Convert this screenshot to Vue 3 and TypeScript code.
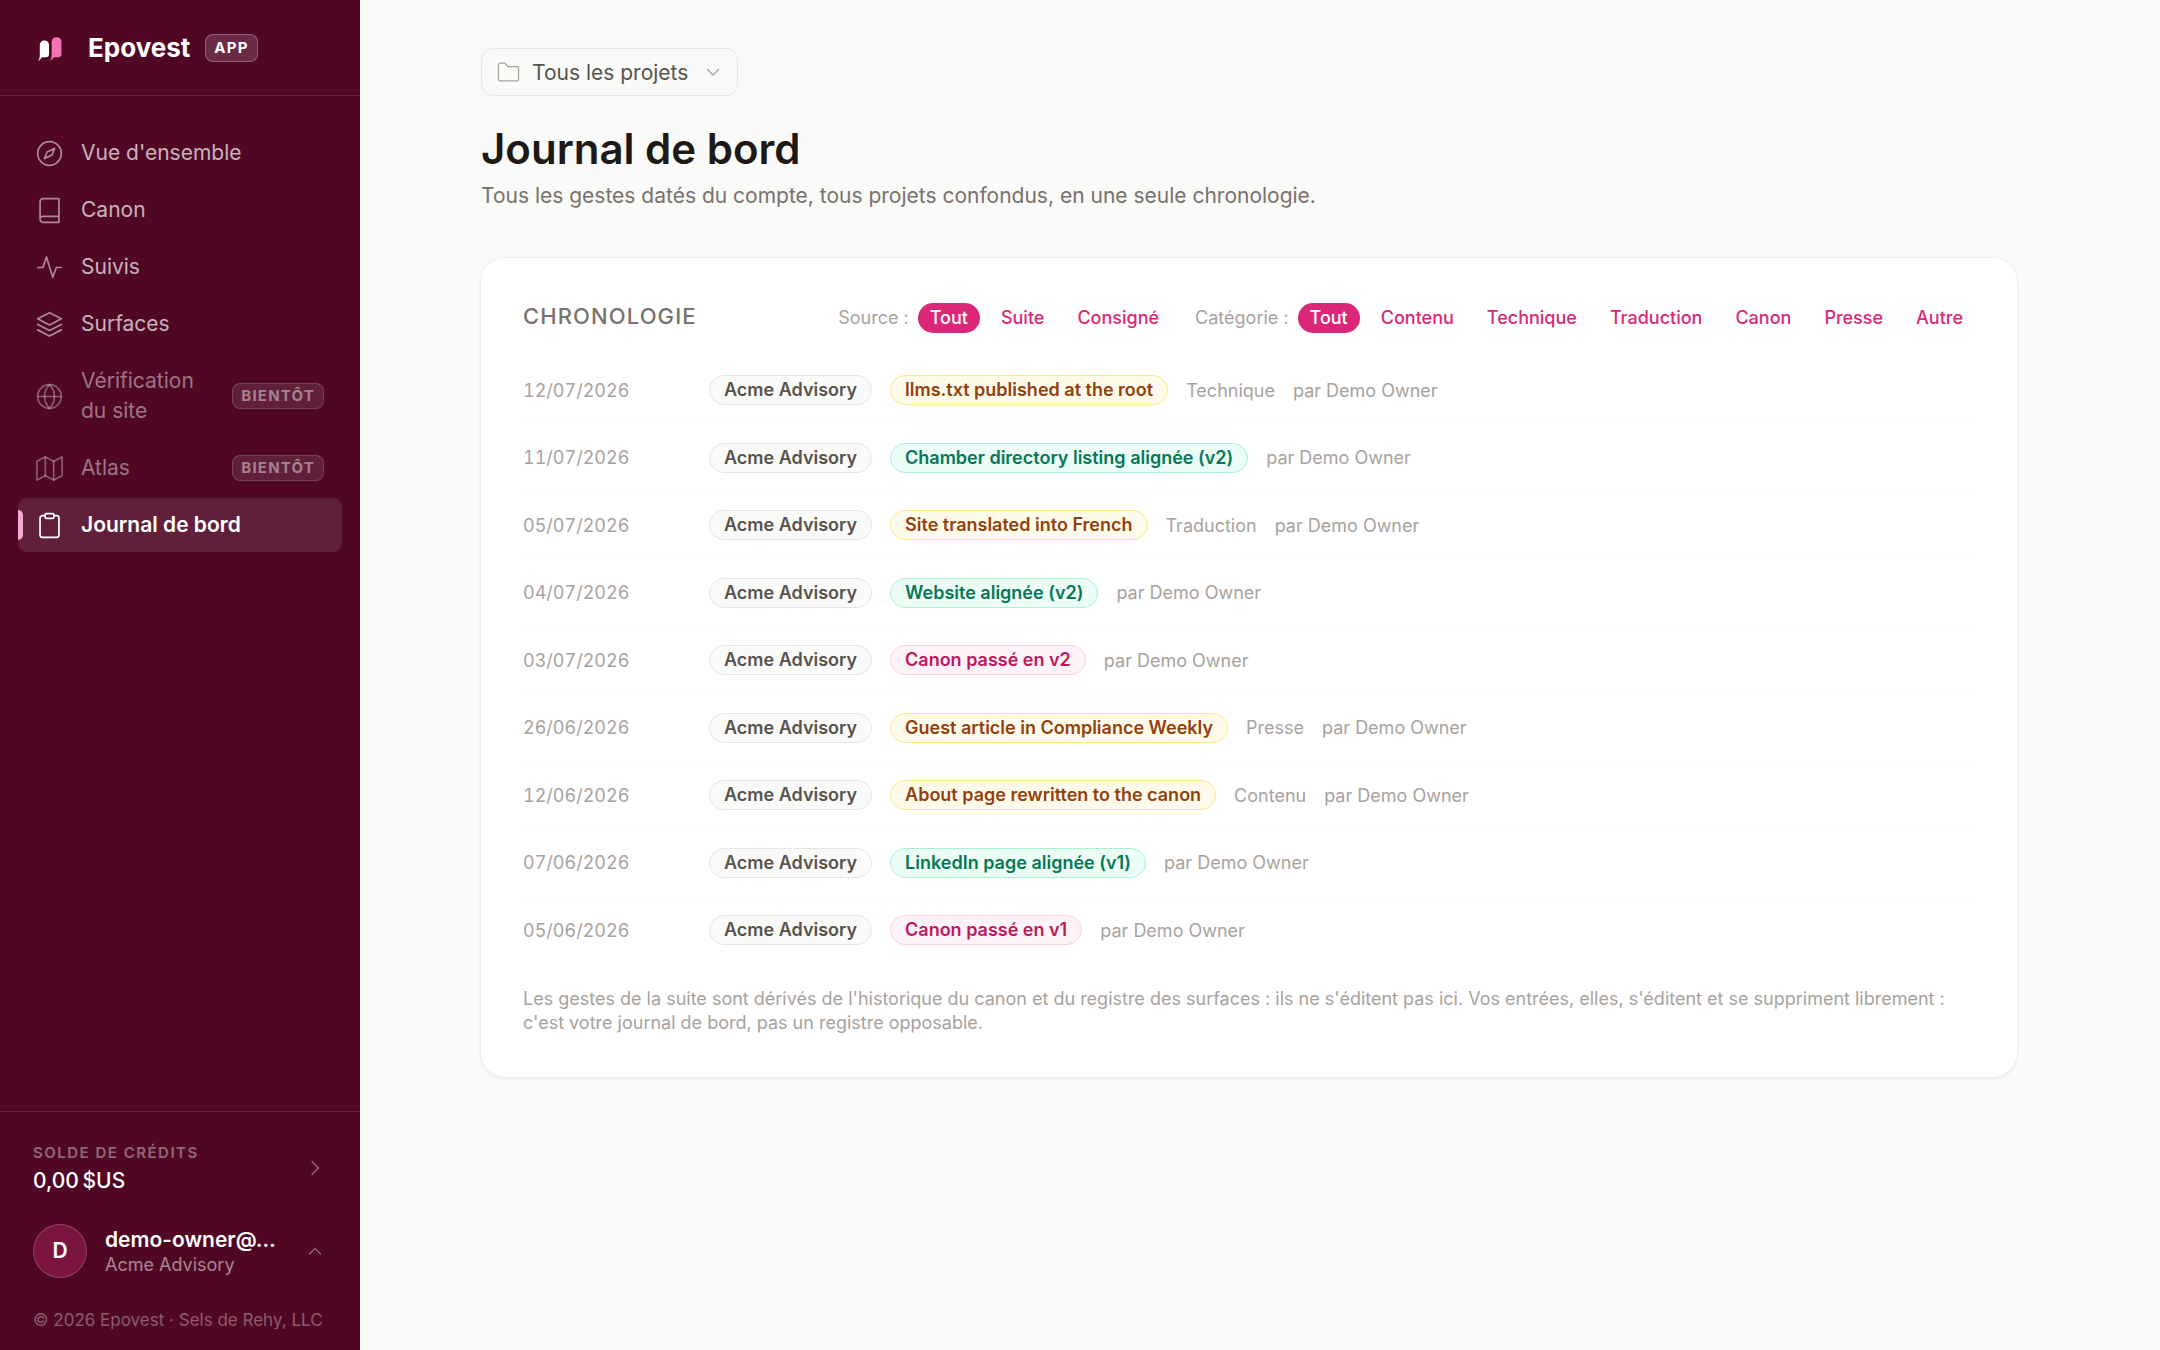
<script setup lang="ts">
import { ref } from 'vue'

type IconName = 'compass' | 'book' | 'pulse' | 'layers' | 'globe' | 'map' | 'clipboard'
type Tone = 'amber' | 'green' | 'pink'

interface NavItem {
  label: string
  icon: IconName
  soon?: boolean
  active?: boolean
}

interface Entry {
  date: string
  title: string
  tone: Tone
  category?: string
}

const icons: Record<IconName, string[]> = {
  compass: ['M12 3a9 9 0 1 0 0 18a9 9 0 1 0 0-18z', 'M15.9 8.1l-2 5-5.8 2.8 2-5z'],
  book: ['M4.8 18.6V5.2A2.2 2.2 0 0 1 7 3h12.2v18H7a2.2 2.2 0 0 1-2.2-2.3A2.2 2.2 0 0 1 7 16.5h12.2'],
  pulse: ['M3 12h4l2.7-8 4.8 15.5L17.2 12H21'],
  layers: ['M12 3l9 4.7-9 4.6-9-4.6z', 'M3 12l9 4.6 9-4.6', 'M3 16.1l9 4.7 9-4.7'],
  globe: ['M12 3a9 9 0 1 0 0 18a9 9 0 1 0 0-18z', 'M3 12h18', 'M12 3c2.5 2.6 3.8 5.6 3.8 9s-1.3 6.4-3.8 9c-2.5-2.6-3.8-5.6-3.8-9s1.3-6.4 3.8-9z'],
  map: ['M2.4 6.5L8.8 3.200l6.400 3.300 6.400-3.300v14.300l-6.400 3.300-6.400-3.300-6.400 3.300z', 'M8.800 3.200v14.300', 'M15.200 6.500v14.300'],
  clipboard: ['M8.6 4.500H6.500A1.700 1.700 0 0 0 4.800 6.200v13.100A1.700 1.700 0 0 0 6.500 21h11a1.700 1.700 0 0 0 1.700-1.700V6.200a1.700 1.700 0 0 0-1.700-1.700h-2.100', 'M9.600 3h4.800a1 1 0 0 1 1 1v1.500a1 1 0 0 1-1 1H9.600a1 1 0 0 1-1-1V4a1 1 0 0 1 1-1z'],
}

const nav: NavItem[] = [
  { label: "Vue d'ensemble", icon: 'compass' },
  { label: 'Canon', icon: 'book' },
  { label: 'Suivis', icon: 'pulse' },
  { label: 'Surfaces', icon: 'layers' },
  { label: 'Vérification du site', icon: 'globe', soon: true },
  { label: 'Atlas', icon: 'map', soon: true },
  { label: 'Journal de bord', icon: 'clipboard', active: true },
]

const sources = ['Tout', 'Suite', 'Consigné']
const categories = ['Tout', 'Contenu', 'Technique', 'Traduction', 'Canon', 'Presse', 'Autre']
const source = ref('Tout')
const category = ref('Tout')

const entries: Entry[] = [
  { date: '12/07/2026', title: 'llms.txt published at the root', tone: 'amber', category: 'Technique' },
  { date: '11/07/2026', title: 'Chamber directory listing alignée (v2)', tone: 'green' },
  { date: '05/07/2026', title: 'Site translated into French', tone: 'amber', category: 'Traduction' },
  { date: '04/07/2026', title: 'Website alignée (v2)', tone: 'green' },
  { date: '03/07/2026', title: 'Canon passé en v2', tone: 'pink' },
  { date: '26/06/2026', title: 'Guest article in Compliance Weekly', tone: 'amber', category: 'Presse' },
  { date: '12/06/2026', title: 'About page rewritten to the canon', tone: 'amber', category: 'Contenu' },
  { date: '07/06/2026', title: 'LinkedIn page alignée (v1)', tone: 'green' },
  { date: '05/06/2026', title: 'Canon passé en v1', tone: 'pink' },
]
</script>

<template>
  <div class="shell">
    <aside class="sidebar">
      <a class="brand" href="#">
        <svg class="logo" viewBox="-1 -1 24 24" aria-hidden="true">
          <path fill="#fff" d="M1 23C2 21.500 2.500 20 2.500 17.500V8A4 4 0 0 1 6.500 4h.5A4 4 0 0 1 11 8v8.500A3 3 0 0 1 8 19.500H4.500C3.500 20.500 2.500 22 1 23z" />
          <path fill="#f472b6" d="M11.500 23C13 21.500 13.500 20 13.500 17.500V5A4 4 0 0 1 17.500 1h1A4 4 0 0 1 22.500 5v11.500A3 3 0 0 1 19.500 19.500H15.500C14.500 20.500 13.500 22 11.500 23z" />
        </svg>
        <span class="brand-name">Epovest</span>
        <span class="tag tag-app">APP</span>
      </a>

      <nav class="nav" aria-label="Navigation principale">
        <a
          v-for="item in nav"
          :key="item.label"
          href="#"
          class="nav-item"
          :class="{ active: item.active, soon: item.soon }"
          :aria-current="item.active ? 'page' : undefined"
        >
          <svg class="nav-icon" viewBox="1.7 1.7 20.6 20.6" aria-hidden="true">
            <path v-for="d in icons[item.icon]" :key="d" :d="d" />
          </svg>
          <span class="nav-label">{{ item.label }}</span>
          <span v-if="item.soon" class="tag tag-soon">BIENTÔT</span>
        </a>
      </nav>

      <div class="account">
        <a class="credits" href="#">
          <span class="credits-text">
            <span class="credits-label">SOLDE DE CRÉDITS</span>
            <span class="credits-value">0,00&#8239;$US</span>
          </span>
          <svg class="chevron" viewBox="0 0 18 18" aria-hidden="true"><path d="M6 2.500l6.500 6.500L6 15.500" /></svg>
        </a>
        <button class="user" type="button">
          <span class="avatar">D</span>
          <span class="user-text">
            <span class="user-name">demo-owner@…</span>
            <span class="user-org">Acme Advisory</span>
          </span>
          <svg class="chevron" viewBox="0 0 18 18" aria-hidden="true"><path d="M3.500 12L9 6.500l5.500 5.500" /></svg>
        </button>
        <p class="copyright">© 2026 Epovest · Sels de Rehy, LLC</p>
      </div>
    </aside>

    <main class="main">
      <div class="content">
        <button class="project" type="button">
          <svg class="folder" viewBox="0 0 24 24" aria-hidden="true">
            <path d="M1.500 19V4A1.800 1.800 0 0 1 3.300 2.200h5l3 3.600H20.700a1.800 1.800 0 0 1 1.800 1.800V19a1.800 1.800 0 0 1-1.800 1.800H3.300A1.800 1.800 0 0 1 1.500 19z" />
          </svg>
          <span>Tous les projets</span>
          <svg class="chevron" viewBox="0 0 18 18" aria-hidden="true"><path d="M3.500 6.500L9 12l5.500-5.500" /></svg>
        </button>

        <h1>Journal de bord</h1>
        <p class="subtitle">Tous les gestes datés du compte, tous projets confondus, en une seule chronologie.</p>

        <section class="card">
          <header class="card-head">
            <h2>CHRONOLOGIE</h2>
            <div class="filters">
              <div class="filter" role="group" aria-label="Source">
                <span class="filter-label">Source :</span>
                <button
                  v-for="s in sources"
                  :key="s"
                  type="button"
                  class="chip"
                  :class="{ on: s === source }"
                  :aria-pressed="s === source"
                  @click="source = s"
                >{{ s }}</button>
              </div>
              <div class="filter" role="group" aria-label="Catégorie">
                <span class="filter-label">Catégorie :</span>
                <button
                  v-for="c in categories"
                  :key="c"
                  type="button"
                  class="chip"
                  :class="{ on: c === category }"
                  :aria-pressed="c === category"
                  @click="category = c"
                >{{ c }}</button>
              </div>
            </div>
          </header>

          <ol class="rows">
            <li v-for="e in entries" :key="e.date" class="row">
              <time class="date">{{ e.date }}</time>
              <span class="pill">Acme Advisory</span>
              <span class="pill" :class="e.tone">{{ e.title }}</span>
              <span v-if="e.category" class="meta">{{ e.category }}</span>
              <span class="meta">par Demo Owner</span>
            </li>
          </ol>

          <p class="note">
            Les gestes de la suite sont dérivés de l'historique du canon et du registre des surfaces : ils ne s'éditent
            pas ici. Vos entrées, elles, s'éditent et se suppriment librement : c'est votre journal de bord, pas un
            registre opposable.
          </p>
        </section>
      </div>
    </main>
  </div>
</template>

<style>
body {
  background: #fafaf9;
}
</style>

<style scoped>
.shell,
.shell * {
  box-sizing: border-box;
}
.shell {
  display: flex;
  min-height: 100vh;
  font-family: Inter, 'Liberation Sans', sans-serif;
  font-size: 21px;
  color: #1c1917;
  background: #fafaf9;
}
a {
  color: inherit;
  text-decoration: none;
}
button {
  font: inherit;
  color: inherit;
  background: none;
  border: 0;
  padding: 0;
  cursor: pointer;
}
svg {
  flex: none;
  fill: none;
  stroke: currentColor;
  stroke-width: 1.3;
  stroke-linecap: round;
  stroke-linejoin: round;
}
h1,
h2,
p,
ol {
  margin: 0;
  padding: 0;
}

/* Sidebar */
.sidebar {
  flex: none;
  display: flex;
  flex-direction: column;
  width: 360px;
  background: #500724;
  color: #fff;
}
.brand {
  display: flex;
  align-items: center;
  height: 96px;
  padding: 0 36px;
  border-bottom: 1px solid rgba(255, 255, 255, 0.1);
}
.logo {
  width: 26px;
  height: 26px;
  margin-right: 26px;
  stroke: none;
}
.brand-name {
  margin-right: 15px;
  font-size: 26px;
  font-weight: 700;
  line-height: 36px;
}
.tag {
  flex: none;
  border: 1px solid rgba(255, 255, 255, 0.25);
  border-radius: 8px;
  background: rgba(255, 255, 255, 0.15);
  padding: 0 8px;
  font-size: 15px;
  font-weight: 700;
  line-height: 26px;
  letter-spacing: 0.08em;
}
.nav {
  flex: 1;
  display: flex;
  flex-direction: column;
  gap: 3px;
  padding: 30px 18px;
}
.nav-item {
  position: relative;
  display: flex;
  align-items: center;
  gap: 18px;
  padding: 12px 18px;
  border-radius: 9px;
  line-height: 30px;
  color: rgba(255, 255, 255, 0.7);
}
.nav-icon {
  width: 27px;
  height: 27px;
  opacity: 0.75;
}
.nav-label {
  flex: 1;
}
.soon {
  color: rgba(255, 255, 255, 0.45);
}
.tag-soon {
  border-color: rgba(255, 255, 255, 0.15);
  background: rgba(255, 255, 255, 0.1);
  line-height: 24px;
}
.active {
  background: rgba(255, 255, 255, 0.1);
  color: #fff;
  font-weight: 600;
}
.active .nav-icon {
  opacity: 1;
}
.active::before {
  content: '';
  position: absolute;
  left: 0;
  top: 12px;
  bottom: 12px;
  width: 5px;
  border-radius: 0 5px 5px 0;
  background: #f9a8d4;
}
.account {
  display: flex;
  flex-direction: column;
  padding: 27px 33px 18px;
  border-top: 1px solid rgba(255, 255, 255, 0.1);
}
.credits {
  display: flex;
  align-items: center;
  justify-content: space-between;
  padding-right: 3px;
}
.credits-text,
.user-text {
  display: flex;
  flex-direction: column;
}
.credits-label {
  font-size: 15px;
  font-weight: 600;
  line-height: 27px;
  letter-spacing: 0.1em;
  color: rgba(255, 255, 255, 0.4);
}
.credits-value {
  font-weight: 500;
  line-height: 30px;
}
.account .chevron {
  width: 18px;
  height: 18px;
  color: rgba(255, 255, 255, 0.4);
}
.user {
  display: flex;
  align-items: center;
  gap: 18px;
  margin-top: 28px;
  padding-right: 3px;
  text-align: left;
}
.avatar {
  flex: none;
  width: 54px;
  border: 1px solid rgba(255, 255, 255, 0.2);
  border-radius: 50%;
  background: #7a1541;
  font-weight: 600;
  line-height: 52px;
  text-align: center;
}
.user-text {
  flex: 1;
}
.user-name {
  font-weight: 600;
  line-height: 27px;
}
.user-org {
  font-size: 18px;
  line-height: 24px;
  color: rgba(255, 255, 255, 0.5);
}
.copyright {
  margin-top: 30px;
  font-size: 17px;
  line-height: 24px;
  color: rgba(255, 255, 255, 0.35);
}

/* Main column */
.main {
  flex: 1;
  min-width: 0;
  padding: 48px 22px 48px 0;
}
.content {
  max-width: 1536px;
  margin: 0 auto;
}
.project {
  display: flex;
  align-items: center;
  gap: 12px;
  height: 48px;
  padding: 0 15px;
  border: 1px solid #e7e5e4;
  border-radius: 12px;
  color: #57534e;
}
.project .chevron {
  width: 18px;
  height: 18px;
  margin-left: 4px;
  color: #a8a29e;
}
.folder {
  width: 23px;
  height: 23px;
  color: #a8a29e;
}
h1 {
  margin-top: 24px;
  font-size: 42px;
  font-weight: 600;
  line-height: 57px;
}
.subtitle {
  margin-top: 2px;
  line-height: 33px;
  color: #78716c;
}
.card {
  margin-top: 46px;
  padding: 42px;
  border-radius: 24px;
  background: #fff;
  box-shadow: 0 0 0 1px rgba(28, 25, 23, 0.02), 0 1px 4px rgba(28, 25, 23, 0.08);
}
.card-head {
  display: flex;
  align-items: flex-end;
  justify-content: space-between;
  margin-bottom: 24px;
}
h2 {
  font-size: 22px;
  font-weight: 500;
  line-height: 33px;
  letter-spacing: 0.05em;
  color: #78716c;
}
.filters {
  display: flex;
  gap: 24px;
  font-size: 18px;
  line-height: 30px;
}
.filter {
  display: flex;
  gap: 9px;
}
.filter-label {
  color: #a8a29e;
}
.chip {
  padding: 0 12px;
  border-radius: 15px;
  color: #db2777;
  font-weight: 500;
}
.chip.on {
  background: #db2777;
  color: #fff;
}
.rows {
  list-style: none;
}
.row {
  display: flex;
  align-items: center;
  gap: 18px;
  height: 67px;
  border-bottom: 1px solid #fafaf9;
  font-size: 18px;
  color: #a8a29e;
}
.row:nth-child(even) {
  height: 68px;
}
.row:last-child {
  height: 66px;
  border-bottom: 0;
}
.date {
  width: 168px;
  font-variant-numeric: tabular-nums;
}
.pill {
  padding: 0 14px;
  border: 1px solid #e7e5e4;
  border-radius: 15px;
  background: #fafaf9;
  color: #57534e;
  font-weight: 600;
  line-height: 28px;
}
.amber {
  border-color: #fde68a;
  background: #fffbeb;
  color: #92400e;
}
.green {
  border-color: #a7f3d0;
  background: #ecfdf5;
  color: #047857;
}
.pink {
  border-color: #fbcfe8;
  background: #fdf2f8;
  color: #be185d;
}
.note {
  margin-top: 24px;
  font-size: 18px;
  line-height: 24px;
  color: #a8a29e;
}
</style>
